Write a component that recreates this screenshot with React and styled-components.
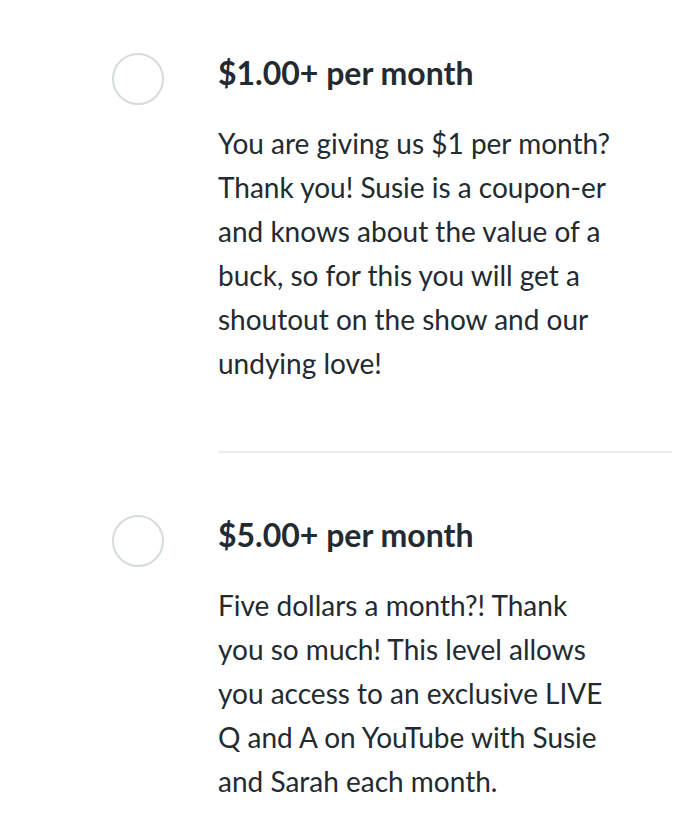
import styled, { createGlobalStyle } from "styled-components";

const GlobalStyle = createGlobalStyle`
  html, body, #root {
    margin: 0;
    padding: 0;
    background: #ffffff;
  }
  body {
    font-family: Lato, "Noto Sans", sans-serif;
    color: #232a30;
  }
`;

const tiers = [
  {
    price: "$1.00+ per month",
    text: "You are giving us $1 per month? Thank you! Susie is a coupon-er and knows about the value of a buck, so for this you will get a shoutout on the show and our undying love!",
  },
  {
    price: "$5.00+ per month",
    text: "Five dollars a month?! Thank you so much! This level allows you access to an exclusive LIVE Q and A on YouTube with Susie and Sarah each month.",
  },
];

export default function App() {
  return (
    <>
      <GlobalStyle />
      <List>
        {tiers.map((t, i) => (
          <Tier key={t.price}>
            <Radio />
            <Content>
              <Price>{t.price}</Price>
              <Description>{t.text}</Description>
              {i < tiers.length - 1 && <Divider />}
            </Content>
          </Tier>
        ))}
      </List>
    </>
  );
}

const List = styled.div`
  display: flex;
  flex-direction: column;
  padding: 53px 26px 0 112px;
`;

const Tier = styled.div`
  display: flex;
  align-items: flex-start;
  gap: 54px;
`;

const Radio = styled.div`
  flex: none;
  width: 48px;
  height: 48px;
  border-radius: 50%;
  border: 2px solid #d6dbde;
`;

const Content = styled.div`
  flex: 1;
  display: flex;
  flex-direction: column;
`;

const Price = styled.h3`
  margin: 0;
  font-size: 32px;
  line-height: 40px;
  font-weight: 700;
`;

const Description = styled.p`
  margin: 28px 0 0;
  padding-right: 56px;
  font-size: 28px;
  line-height: 44px;
  font-weight: 400;
`;

const Divider = styled.hr`
  margin: 66px 0 62px;
  border: none;
  height: 2px;
  background: #ebeeef;
`;
